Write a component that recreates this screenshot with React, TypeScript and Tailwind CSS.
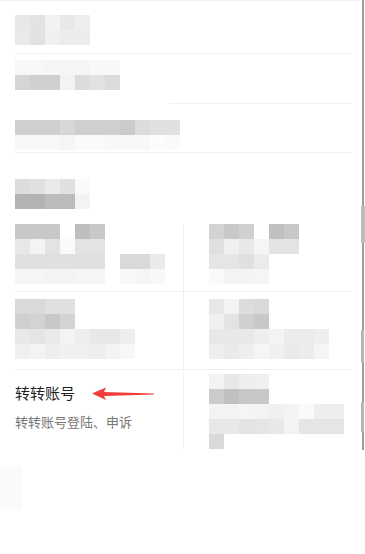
import React from 'react';

type Rows = string[][];

// pixelated (mosaic) placeholder, 15px cells
const Mosaic: React.FC<{ rows: Rows }> = ({ rows }) => (
  <div className="flex flex-col">
    {rows.map((row, i) => (
      <div key={i} className="flex">
        {row.map((c, j) => (
          <div key={j} className="h-[15px] w-[15px]" style={{ backgroundColor: '#' + c }} />
        ))}
      </div>
    ))}
  </div>
);

const top1: Rows = [
  ['e8e8e8', 'e3e3e3', 'f2f2f2', 'e8e8e8', 'eeeeee'],
  ['eaeaea', 'e2e2e2', 'f0f0f0', 'ececec', 'ececec'],
];
const top2: Rows = [
  ['f7f7f7', 'f8f8f8', 'f5f5f5', 'f5f5f5', 'f5f5f5', 'f8f8f8', 'f8f8f8'],
  ['d5d5d5', 'cfcfcf', 'cfcfcf', 'f3f3f3', 'dcdcdc', 'e2e2e2', 'dcdcdc'],
];
const top3: Rows = [
  ['cfcfcf', 'cfcfcf', 'cfcfcf', 'd7d7d7', 'cfcfcf', 'cfcfcf', 'cfcfcf', 'cbcbcb', 'dcdcdc', 'e0e0e0', 'e0e0e0'],
  ['f8f8f8', 'f8f8f8', 'f8f8f8', 'f5f5f5', 'fafafa', 'fafafa', 'f8f8f8', 'f8f8f8', 'f8f8f8', 'fcfcfc', 'fafafa'],
];
const heading: Rows = [
  ['dcdcdc', 'e0e0e0', 'eaeaea', 'e0e0e0', 'fafafa'],
  ['b3b3b3', 'b3b3b3', 'bcbcbc', 'bcbcbc', 'f3f3f3'],
];

const a1: Rows = [
  ['c8c8c8', 'c8c8c8', 'c8c8c8', 'ffffff', 'bebebe', 'c8c8c8'],
  ['e8e8e8', 'f3f3f3', 'e3e3e3', 'fafafa', 'e3e3e3', 'e3e3e3'],
  ['e0e0e0', 'e0e0e0', 'e0e0e0', 'e0e0e0', 'e0e0e0', 'e0e0e0', 'ffffff', 'd9d9d9', 'd9d9d9', 'eaeaea'],
  ['f5f5f5', 'f5f5f5', 'f3f3f3', 'f3f3f3', 'f5f5f5', 'f5f5f5', 'ffffff', 'f8f8f8', 'f5f5f5', 'f8f8f8'],
];
const b1: Rows = [
  ['d3d3d3', 'c8c8c8', 'd0d0d0', 'ffffff', 'c0c0c0', 'c8c8c8'],
  ['e0e0e0', 'f0f0f0', 'e8e8e8', 'f5f5f5', 'e3e3e3', 'e3e3e3'],
  ['e5e5e5', 'e5e5e5', 'e0e0e0', 'ebebeb'],
  ['fafafa', 'f3f3f3', 'f3f3f3', 'f5f5f5'],
];
const a2: Rows = [
  ['d9d9d9', 'd9d9d9', 'e0e0e0', 'e0e0e0'],
  ['d0d0d0', 'd3d3d3', 'c8c8c8', 'd3d3d3'],
  ['e8e8e8', 'e5e5e5', 'eaeaea', 'f3f3f3', 'eeeeee', 'e8e8e8', 'e8e8e8', 'eeeeee'],
  ['f0f0f0', 'f3f3f3', 'eeeeee', 'f0f0f0', 'f0f0f0', 'eeeeee', 'f3f3f3', 'f8f8f8'],
];
const b2: Rows = [
  ['e8e8e8', 'f3f3f3', 'dcdcdc', 'd9d9d9'],
  ['f0f0f0', 'e3e3e3', 'd0d0d0', 'c8c8c8'],
  ['e8e8e8', 'e8e8e8', 'e8e8e8', 'eeeeee', 'f3f3f3', 'ebebeb', 'ebebeb', 'eeeeee'],
  ['eeeeee', 'eaeaea', 'eeeeee', 'f5f5f5', 'f0f0f0', 'eaeaea', 'ececec', 'f5f5f5'],
];
const b3: Rows = [
  ['f3f3f3', 'e8e8e8', 'eeeeee', 'f0f0f0'],
  ['cbcbcb', 'c0c0c0', 'c8c8c8', 'c8c8c8'],
  ['f3f3f3', 'f3f3f3', 'f5f5f5', 'f3f3f3', 'f0f0f0', 'f3f3f3', 'fafafa', 'eeeeee', 'eeeeee'],
  ['e8e8e8', 'e8e8e8', 'e3e3e3', 'e5e5e5', 'e8e8e8', 'f3f3f3', 'e5e5e5', 'e5e5e5', 'e5e5e5'],
  ['d9d9d9'],
];

const Arrow = () => (
  <svg width="64" height="14" viewBox="0 0 64 14" className="block">
    <path d="M0 6.5 L14 0.5 L12 5 L62 6.6 L62 7.4 L12 9 L14 13 Z" fill="#f43b3b" />
  </svg>
);

const App: React.FC = () => {
  return (
    <div className="flex min-h-[554px] w-[365px] bg-white" style={{ fontFamily: '"Noto Sans CJK SC", "Noto Sans", sans-serif' }}>
      <div className="w-[360px]">
        <div className="border-t border-[#f0f0f0] pl-[15px] pr-[8px]">
          <div className="border-b border-[#f2f2f2] pt-[14px] pb-[8px]">
            <Mosaic rows={top1} />
          </div>
          <div className="pt-[6px] pb-[13px]">
            <Mosaic rows={top2} />
          </div>
          <div className="ml-[155px] h-px bg-[#f2f2f2]" />
          <div className="border-b border-[#f2f2f2] pt-[16px] pb-[2px]">
            <Mosaic rows={top3} />
          </div>
          <div className="pt-[26px] pb-[15px]">
            <Mosaic rows={heading} />
          </div>

          <div className="grid grid-cols-[169px_1fr]">
            <div className="h-[68px] border-r border-b border-[#f3f3f3]">
              <Mosaic rows={a1} />
            </div>
            <div className="h-[68px] border-b border-[#f3f3f3] pl-[25px]">
              <Mosaic rows={b1} />
            </div>

            <div className="h-[78px] border-r border-b border-[#f0f0f0] pt-[7px]">
              <Mosaic rows={a2} />
            </div>
            <div className="h-[78px] border-b border-[#f0f0f0] pt-[7px] pl-[25px]">
              <Mosaic rows={b2} />
            </div>

            <div className="h-[79px] border-r border-[#f3f3f3] pt-[13px]">
              <div className="flex items-center">
                <span className="text-[15px] leading-[20px] text-[#1f1f1f]">转转账号</span>
                <span className="ml-[17px] mt-[1px]">
                  <Arrow />
                </span>
              </div>
              <div className="mt-[10px] text-[13px] leading-[18px] text-[#777777]">转转账号登陆、申诉</div>
            </div>
            <div className="h-[79px] pt-[4px] pl-[25px]">
              <Mosaic rows={b3} />
            </div>
          </div>
        </div>
        <div className="mt-[18px] h-[42px] w-[22px] bg-[#fafafa]" />
      </div>

      <div className="flex h-[450px] w-[5px] flex-col items-center">
        <div className="h-[206px] w-[2px] bg-[#9e9e9e]" />
        <div className="h-[37px] w-[4px] bg-[#bdbdbd]" />
        <div className="h-[87px] w-[2px] bg-[#9e9e9e]" />
        <div className="h-[32px] w-[3px] bg-[#b5b5b5]" />
        <div className="h-[40px] w-[2px] bg-[#9e9e9e]" />
        <div className="h-[30px] w-[3px] bg-[#b5b5b5]" />
        <div className="h-[18px] w-[2px] bg-[#9e9e9e]" />
      </div>
    </div>
  );
};

export default App;
